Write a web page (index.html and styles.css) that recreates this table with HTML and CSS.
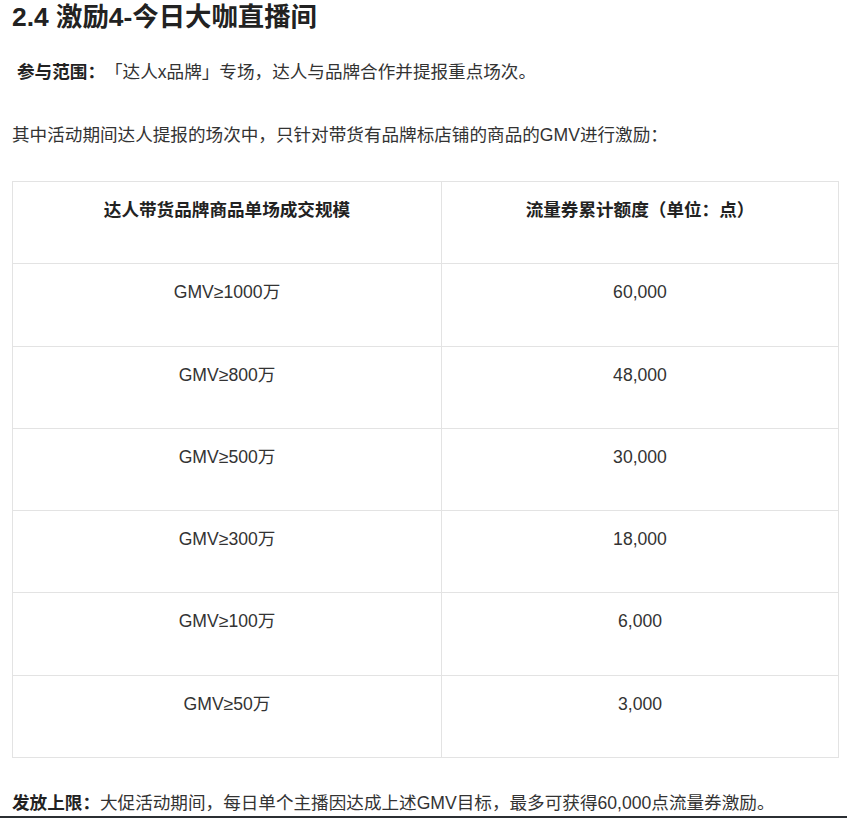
FILE: index.html
```html
<!DOCTYPE html>
<html lang="zh">
<head>
<meta charset="utf-8">
<link rel="stylesheet" href="styles.css">
</head>
<body>
<div class="doc">
  <h2 class="title">2.4 激励4-今日大咖直播间</h2>
  <p class="scope"><strong>参与范围：</strong>「达人x品牌」专场，达人与品牌合作并提报重点场次。</p>
  <p class="para">其中活动期间达人提报的场次中，只针对带货有品牌标店铺的商品的GMV进行激励：</p>
  <table class="grid">
    <colgroup><col class="c1"><col class="c2"></colgroup>
    <thead>
      <tr><th>达人带货品牌商品单场成交规模</th><th>流量券累计额度（单位：点）</th></tr>
    </thead>
    <tbody>
      <tr><td>GMV≥1000万</td><td>60,000</td></tr>
      <tr><td>GMV≥800万</td><td>48,000</td></tr>
      <tr><td>GMV≥500万</td><td>30,000</td></tr>
      <tr><td>GMV≥300万</td><td>18,000</td></tr>
      <tr><td>GMV≥100万</td><td>6,000</td></tr>
      <tr><td>GMV≥50万</td><td>3,000</td></tr>
    </tbody>
  </table>
  <p class="para limit"><strong>发放上限：</strong>大促活动期间，每日单个主播因达成上述GMV目标，最多可获得60,000点流量券激励。</p>
  <div class="rule"></div>
</div>
</body>
</html>
```

FILE: styles.css
```css
html, body {
  margin: 0;
  padding: 0;
  background: #fff;
}
body {
  font-family: "Liberation Sans", Arial, "Noto Sans CJK SC", sans-serif;
  color: #333;
  font-size: 17.6px;
  text-spacing-trim: space-all;
}
.doc {
  padding: 0 0 0 12px;
  width: 835px;
}
.title {
  margin: 0;
  font-size: 26.4px;
  line-height: 34px;
  font-weight: bold;
  color: #222;
}
.scope {
  margin: 26px 0 0 0;
  padding-left: 5px;
  line-height: 24px;
}
.scope strong, .limit strong {
  color: #222;
}
.para {
  margin: 39px 0 0 0;
  line-height: 24px;
}
.grid {
  margin-top: 34px;
  border-collapse: collapse;
  width: 826px;
  table-layout: fixed;
}
.c1 { width: 429px; }
.c2 { width: 397px; }
.grid th, .grid td {
  border: 1px solid #e3e3e3;
  text-align: center;
  vertical-align: top;
  height: 82.3px;
  box-sizing: border-box;
  padding: 16px 8px 0 8px;
  line-height: 24px;
  font-size: 17.6px;
}
.grid th {
  font-weight: bold;
  color: #222;
}
.limit {
  margin-top: 33px;
}
.rule {
  margin: 1px 0 0 -12px;
  width: 847px;
  height: 2px;
  background: #2b2f33;
}
```
